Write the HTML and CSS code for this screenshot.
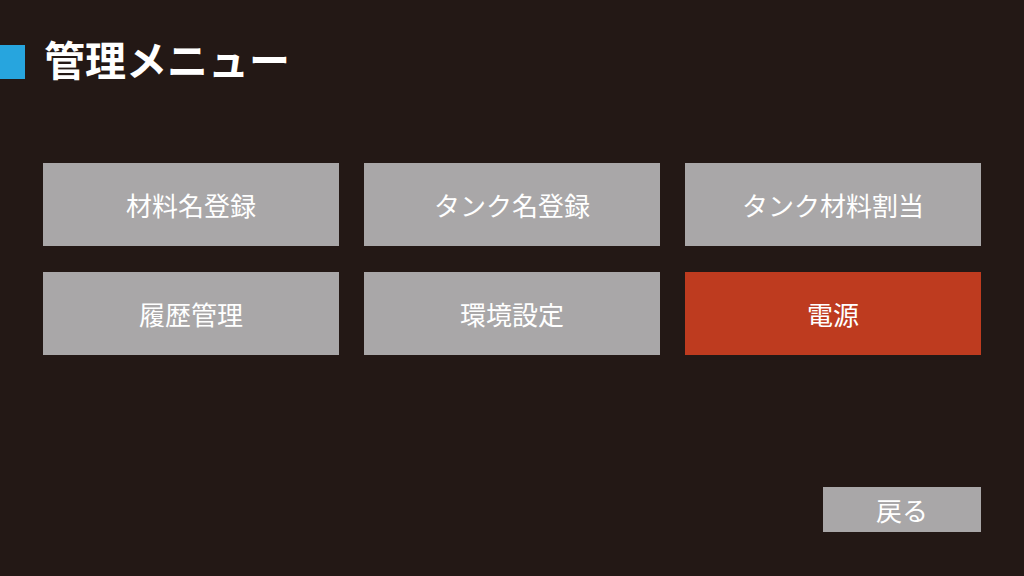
FILE: index.html
```html
<!DOCTYPE html>
<html lang="ja">
<head>
    <meta charset="UTF-8">
    <meta name="viewport" content="width=device-width, initial-scale=1.0">
    <title>管理メニュー</title>
    <link rel="stylesheet" href="styles.css">
</head>
<body>
    <div class="screen">
        <div class="header">
            <div class="header-mark"></div>
            <h1>管理メニュー</h1>
        </div>

        <div class="menu-grid">
            <button class="menu-button">材料名登録</button>
            <button class="menu-button">タンク名登録</button>
            <button class="menu-button">タンク材料割当</button>
            <button class="menu-button">履歴管理</button>
            <button class="menu-button">環境設定</button>
            <button class="menu-button power">電源</button>
        </div>

        <div class="footer">
            <button class="back-button">戻る</button>
        </div>
    </div>
</body>
</html>
```

FILE: styles.css
```css
body {
    margin: 0;
    background: #231815;
    font-family: "Noto Sans CJK JP", "Noto Sans", sans-serif;
    color: #ffffff;
}

.screen {
    width: 1024px;
    height: 576px;
    display: flex;
    flex-direction: column;
    box-sizing: border-box;
}

.header {
    display: flex;
    align-items: center;
    height: 34px;
    margin-top: 45px;
}

.header-mark {
    width: 25px;
    height: 34px;
    background: #27a5de;
}

.header h1 {
    margin: 0 0 8px 19px;
    font-size: 41px;
    font-weight: 700;
    line-height: 34px;
}

.menu-grid {
    display: grid;
    grid-template-columns: repeat(3, 296px);
    grid-auto-rows: 83px;
    column-gap: 25px;
    row-gap: 26px;
    margin: 84px 0 0 43px;
}

.menu-button,
.back-button {
    border: none;
    padding: 0;
    margin: 0;
    background: #a9a7a8;
    color: #ffffff;
    font-family: inherit;
    font-size: 26px;
    font-weight: 400;
    cursor: pointer;
}

.menu-button.power {
    background: #be3b1f;
}

.footer {
    display: flex;
    justify-content: flex-end;
    margin: auto 43px 44px 0;
}

.back-button {
    width: 158px;
    height: 45px;
}
```
